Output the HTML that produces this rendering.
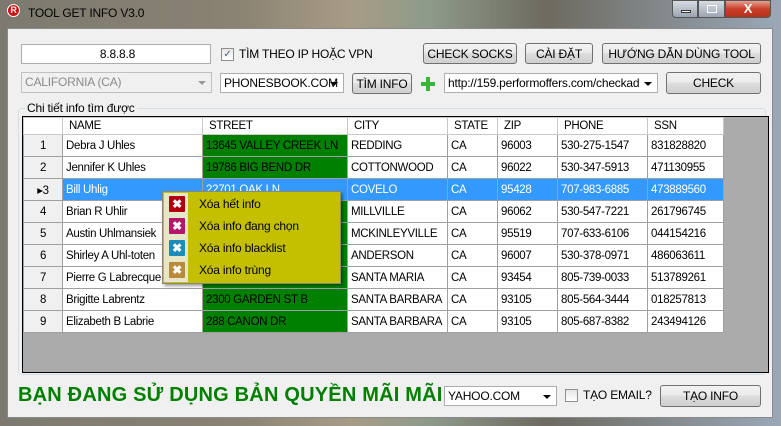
<!DOCTYPE html>
<html><head><meta charset="utf-8"><style>
*{margin:0;padding:0;box-sizing:border-box}
body{width:781px;height:426px;overflow:hidden;position:relative;font-family:"Liberation Sans",sans-serif;font-size:12px;color:#000;background:#6a6a66;letter-spacing:-0.2px}
.abs{position:absolute}
.frame{left:0;top:0;width:781px;height:426px;background:linear-gradient(90deg,#7c7a70 0%,#8a8272 30%,#a79c86 45%,#8e9a8a 55%,#6d6a60 70%,#9aa8b8 100%)}
.client{left:7px;top:28px;width:766px;height:390px;background:#f0f0f0;border:1px solid #8a8a8a}
.btn{position:absolute;border:1px solid #707070;border-radius:3px;background:linear-gradient(#f2f2f2 0%,#ebebeb 45%,#dddddd 50%,#cfcfcf 100%);text-align:center;font-size:12px;line-height:20px;white-space:nowrap}
.inp{position:absolute;background:#fff;border:1px solid #abadb3;font-size:12px;line-height:18px;padding-left:3px;white-space:nowrap;overflow:hidden}
.arrow{position:absolute;right:5px;top:8px;width:0;height:0;border-left:4px solid transparent;border-right:4px solid transparent;border-top:4px solid #000}
.chk{position:absolute;width:13px;height:13px;border:1px solid #8f8f8f;background:linear-gradient(#e6e6e6,#fff)}
table{border-collapse:collapse;position:absolute;left:23px;top:117px;table-layout:fixed;width:700px}
td{border:1px solid #a0a0a0;height:22px;padding-left:3px;padding-top:1px;font-size:11.5px;letter-spacing:-0.3px;white-space:nowrap;overflow:hidden;background:#fff}
tr.h td{height:17px;background:#fff;border-color:#c8c8c8;padding-left:6px;padding-top:0}
td.rh{text-align:center;padding-left:0;background:#f0f0f0}
td.g{background:#008000;color:#000}
tr.sel td{background:#3399ff;color:#fff}
tr.sel td.rh{background:#f0f0f0;color:#000}
.mi{position:absolute;left:36px;font-size:12px}
.ic{position:absolute;left:6px;width:16px;height:16px;color:#fff;font-weight:bold;font-size:12px;line-height:16px;text-align:center;border-radius:1px}
</style></head><body>
<div class="abs frame"></div>
<div class="abs" style="left:7px;top:4px;width:13px;height:13px;border-radius:50%;background:#d01010;border:1px solid #fff;color:#fff;font-size:9px;font-weight:bold;text-align:center;line-height:11px">R</div>
<div class="abs" style="left:28px;top:6px;font-size:12px;color:#000">TOOL GET INFO V3.0</div>
<div class="abs" style="left:672px;top:0;width:26px;height:18px;border:1px solid #555;border-radius:0 0 0 4px;background:linear-gradient(#d8dde4,#9aa4b0)"><div style="margin:9px 0 0 8px;width:10px;height:3px;background:#fff;border:1px solid #333"></div></div>
<div class="abs" style="left:698px;top:0;width:27px;height:18px;border:1px solid #555;background:linear-gradient(#d8dde4,#9aa4b0)"><div style="margin:4px 0 0 8px;width:10px;height:8px;border:1px solid #fff"></div></div>
<div class="abs" style="left:725px;top:0;width:46px;height:18px;border:1px solid #555;border-radius:0 0 4px 0;background:linear-gradient(#e8a090,#c8402a 50%,#b83018);color:#fff;font-weight:bold;text-align:center;line-height:16px;font-size:13px">X</div>
<div class="abs client"></div>
<div class="inp" style="left:21px;top:44px;width:190px;height:20px;text-align:center">8.8.8.8</div>
<div class="chk" style="left:221px;top:48px;text-align:center;font-size:10px;line-height:11px;color:#4a5a8a">✓</div>
<div class="abs" style="left:239px;top:47px">TÌM THEO IP HOẶC VPN</div>
<div class="btn" style="left:423px;top:43px;width:94px;height:21px">CHECK SOCKS</div>
<div class="btn" style="left:525px;top:43px;width:68px;height:21px">CÀI ĐẶT</div>
<div class="btn" style="left:602px;top:43px;width:159px;height:21px">HƯỚNG DẪN DÙNG TOOL</div>
<div class="inp" style="left:21px;top:72px;width:191px;height:21px;color:#8a8a8a;background:#f0f0f0;border-color:#c0c0c0">CALIFORNIA (CA)<div class="arrow" style="border-top-color:#999"></div></div>
<div class="inp" style="left:220px;top:73px;width:124px;height:20px">PHONESBOOK.COM<div class="arrow"></div></div>
<div class="btn" style="left:352px;top:73px;width:60px;height:21px">TÌM INFO</div>
<div class="abs" style="left:421px;top:82px;width:14px;height:4px;background:#3cb43c"></div>
<div class="abs" style="left:426px;top:77px;width:4px;height:14px;background:#3cb43c"></div>
<div class="inp" style="left:444px;top:73px;width:214px;height:20px">http://159.performoffers.com/checkadd.<div style="position:absolute;right:0;top:0;width:18px;height:18px;background:#fff"></div><div class="arrow"></div></div>
<div class="btn" style="left:666px;top:72px;width:95px;height:22px">CHECK</div>
<div class="abs" style="left:18px;top:108px;width:748px;height:267px;border:1px solid #d5dfe5;border-radius:3px"></div>
<div class="abs" style="left:25px;top:101px;background:#f0f0f0;padding:0 2px">Chi tiết info tìm được</div>
<div class="abs" style="left:22px;top:116px;width:747px;height:257px;background:#ababab;border:1px solid #000"></div>
<table>
<colgroup><col style="width:39px"><col style="width:140px"><col style="width:145px"><col style="width:100px"><col style="width:50px"><col style="width:60px"><col style="width:90px"><col style="width:76px"></colgroup>
<tr class="h"><td class="rh"></td><td>NAME</td><td>STREET</td><td>CITY</td><td>STATE</td><td>ZIP</td><td>PHONE</td><td>SSN</td></tr>
<tr><td class="rh">1</td><td>Debra J Uhles</td><td class="g">13645 VALLEY CREEK LN</td><td>REDDING</td><td>CA</td><td>96003</td><td>530-275-1547</td><td>831828820</td></tr>
<tr><td class="rh">2</td><td>Jennifer K Uhles</td><td class="g">19786 BIG BEND DR</td><td>COTTONWOOD</td><td>CA</td><td>96022</td><td>530-347-5913</td><td>471130955</td></tr>
<tr class="sel"><td class="rh">▸3</td><td>Bill Uhlig</td><td>22701 OAK LN</td><td>COVELO</td><td>CA</td><td>95428</td><td>707-983-6885</td><td>473889560</td></tr>
<tr><td class="rh">4</td><td>Brian R Uhlir</td><td class="g"></td><td>MILLVILLE</td><td>CA</td><td>96062</td><td>530-547-7221</td><td>261796745</td></tr>
<tr><td class="rh">5</td><td>Austin Uhlmansiek</td><td class="g"></td><td>MCKINLEYVILLE</td><td>CA</td><td>95519</td><td>707-633-6106</td><td>044154216</td></tr>
<tr><td class="rh">6</td><td>Shirley A Uhl-toten</td><td class="g"></td><td>ANDERSON</td><td>CA</td><td>96007</td><td>530-378-0971</td><td>486063611</td></tr>
<tr><td class="rh">7</td><td>Pierre G Labrecque</td><td class="g"></td><td>SANTA MARIA</td><td>CA</td><td>93454</td><td>805-739-0033</td><td>513789261</td></tr>
<tr><td class="rh">8</td><td>Brigitte Labrentz</td><td class="g">2300 GARDEN ST B</td><td>SANTA BARBARA</td><td>CA</td><td>93105</td><td>805-564-3444</td><td>018257813</td></tr>
<tr><td class="rh">9</td><td>Elizabeth B Labrie</td><td class="g">288 CANON DR</td><td>SANTA BARBARA</td><td>CA</td><td>93105</td><td>805-687-8382</td><td>243494126</td></tr>
</table>
<div class="abs" style="left:162px;top:191px;width:179px;height:93px;background:#c4c000;border:1px solid #8a8a70;box-shadow:2px 2px 3px rgba(0,0,0,.4)">
<div class="abs" style="left:1px;top:1px;width:24px;height:89px;background:#e8e6c8"></div>
<div class="ic" style="top:4px;background:#b00010">✖</div><div class="mi" style="top:5px">Xóa hết info</div>
<div class="ic" style="top:26px;background:#b0186a">✖</div><div class="mi" style="top:27px">Xóa info đang chọn</div>
<div class="ic" style="top:48px;background:#1e8cb8">✖</div><div class="mi" style="top:49px">Xóa info blacklist</div>
<div class="ic" style="top:70px;background:#b88a3a">✖</div><div class="mi" style="top:71px">Xóa info trùng</div>
</div>
<div class="abs" style="left:18px;top:384px;font-size:20px;font-weight:bold;color:#008000;letter-spacing:0.2px">BẠN ĐANG SỬ DỤNG BẢN QUYỀN MÃI MÃI</div>
<div class="inp" style="left:444px;top:386px;width:113px;height:20px">YAHOO.COM<div class="arrow"></div></div>
<div class="chk" style="left:565px;top:389px"></div>
<div class="abs" style="left:583px;top:388px">TẠO EMAIL?</div>
<div class="btn" style="left:660px;top:385px;width:101px;height:22px">TẠO INFO</div>
</body></html>
